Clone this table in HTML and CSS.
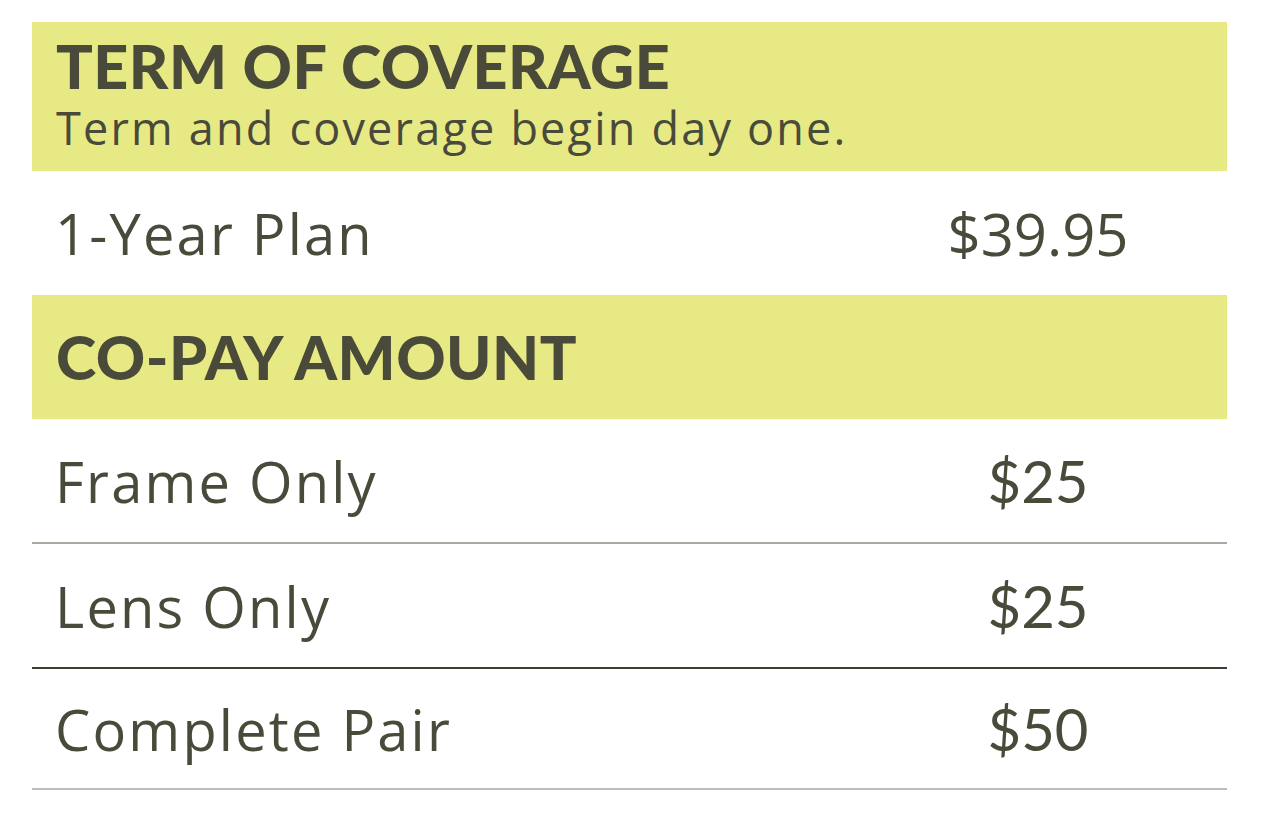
FILE: index.html
```html
<!DOCTYPE html>
<html>
<head>
<meta charset="utf-8">
<link rel="stylesheet" href="styles.css">
</head>
<body>
<div class="panel">
  <div class="band band-first">
    <div class="band-title">TERM OF COVERAGE</div>
    <div class="band-sub">Term and coverage begin day one.</div>
  </div>
  <div class="row row-plan">
    <div class="label">1-Year Plan</div>
    <div class="price price-alt">$39.95</div>
  </div>
  <div class="band band-second">
    <div class="band-title">CO-PAY AMOUNT</div>
  </div>
  <div class="row row-ruled rule-gray">
    <div class="label">Frame Only</div>
    <div class="price">$25</div>
  </div>
  <div class="row row-ruled rule-dark">
    <div class="label">Lens Only</div>
    <div class="price">$25</div>
  </div>
  <div class="row row-ruled rule-light">
    <div class="label">Complete Pair</div>
    <div class="price">$50</div>
  </div>
</div>
</body>
</html>
```
FILE: styles.css
```css
html, body {
  margin: 0;
  padding: 0;
  background: #ffffff;
}
body {
  font-family: "Lato", "Noto Sans", sans-serif;
  color: #4a4a3b;
}
.panel {
  margin: 22px 0 0 32px;
  width: 1195px;
  display: flex;
  flex-direction: column;
}
.band {
  background: #e7ea84;
  padding-left: 24px;
  display: flex;
  flex-direction: column;
}
.band-first {
  height: 149px;
  padding-top: 13px;
  box-sizing: border-box;
}
.band-second {
  height: 124px;
  justify-content: center;
}
.band-title {
  font-weight: 900;
  font-size: 61px;
  line-height: 62px;
  letter-spacing: 0.5px;
}
.band-sub {
  font-family: "Open Sans", "Lato", sans-serif;
  font-size: 45px;
  line-height: 50px;
  margin-top: 6px;
  letter-spacing: 2.2px;
}
.row {
  display: flex;
  align-items: center;
  padding-left: 23px;
}
.row-plan {
  height: 124px;
}
.row-ruled {
  height: 123px;
  border-bottom: 2px solid #a9a9a2;
}
.rule-dark {
  border-bottom-color: #3d3d33;
}
.rule-light {
  height: 119px;
  border-bottom-color: #bdbdb8;
}
.label {
  flex: 1;
  font-family: "Open Sans", "Lato", sans-serif;
  font-size: 56px;
  letter-spacing: 2.2px;
}
.price {
  width: 200px;
  margin-right: 89px;
  text-align: center;
  font-size: 58px;
}
.price-alt {
  font-family: "Open Sans", sans-serif;
  font-size: 58px;
  letter-spacing: 0;
}
```
